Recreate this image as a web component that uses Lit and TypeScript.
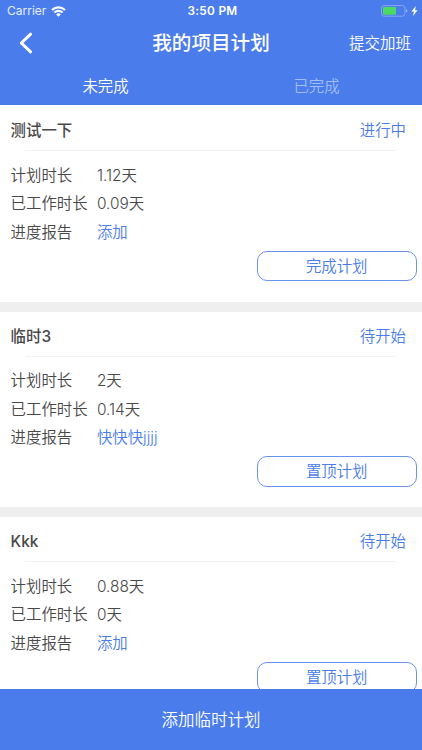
import { LitElement, html, css } from "lit";
import { customElement, property } from "lit/decorators.js";

interface Plan {
  name: string;
  status: string;
  planned: string;
  worked: string;
  report: string;
  action: string;
}

const PLANS: Plan[] = [
  { name: "测试一下", status: "进行中", planned: "1.12天", worked: "0.09天", report: "添加", action: "完成计划" },
  { name: "临时3", status: "待开始", planned: "2天", worked: "0.14天", report: "快快快jjjj", action: "置顶计划" },
  { name: "Kkk", status: "待开始", planned: "0.88天", worked: "0天", report: "添加", action: "置顶计划" },
];

@customElement("status-bar")
export class StatusBar extends LitElement {
  static styles = css`
    :host {
      display: grid;
      grid-template-columns: 1fr auto 1fr;
      align-items: center;
      height: 22px;
      padding: 0 4px 0 7px;
      color: #fff;
      font-size: 12.4px;
      line-height: 22px;
    }
    .left, .right { display: flex; align-items: center; }
    .left { gap: 5px; color: #e6eeff; font-size: 12px; font-weight: 400; }
    .right { justify-content: flex-end; gap: 3px; }
    .time { font-weight: 600; font-size: 11.8px; letter-spacing: 0.3px; }
    svg { display: block; }
  `;

  render() {
    return html`
      <div class="left">
        <span>Carrier</span>
        <svg width="15" height="11" viewBox="0 0 15 11" fill="none" stroke="#fff" stroke-width="2.1">
          <path d="M1 4.1a9.2 9.2 0 0 1 13 0" />
          <path d="M3.4 6.6a5.8 5.8 0 0 1 8.2 0" />
          <path d="M7.5 10.7 5.2 8.4a3.3 3.3 0 0 1 4.6 0z" fill="#fff" stroke="none" />
        </svg>
      </div>
      <div class="time">3:50 PM</div>
      <div class="right">
        <svg width="27" height="12" viewBox="0 0 27 12">
          <rect x="0.5" y="0.6" width="23.4" height="10.6" rx="2.6" fill="none" stroke="#86a8f2" />
          <rect x="2" y="2.1" width="13" height="7.6" rx="1" fill="#4cd964" />
          <path d="M25.1 4.1c1.6.5 1.6 3.1 0 3.6z" fill="#a4bdf5" />
        </svg>
        <svg width="7" height="10" viewBox="0 0 7 10">
          <path d="M4.9 0 0.3 5.5h2.6L1.9 10l4.8-5.8H4z" fill="#fff" />
        </svg>
      </div>
    `;
  }
}

@customElement("plan-card")
export class PlanCard extends LitElement {
  static styles = css`
    :host {
      display: block;
      box-sizing: border-box;
      height: 195.7px;
      background: #fff;
      color: #484848;
      font-size: 15.4px;
    }
    .head {
      display: flex;
      justify-content: space-between;
      height: 44px;
      padding: 0 16px 0 10.6px;
      line-height: 50.6px;
    }
    .name { font-weight: 500; }
    .status, .link { color: #4a7cea; }
    .rule { height: 1px; margin: 0 26px; background: #f3f3f3; }
    .rows { padding: 10.5px 0 0 10.6px; }
    .row { display: flex; height: 28.6px; line-height: 28.6px; }
    .label { width: 86.3px; }
    .action {
      box-sizing: border-box;
      width: 160px;
      height: 30.6px;
      margin: 3.3px 5.3px 0 auto;
      border: 1px solid #6a93ee;
      border-radius: 10px;
      color: #4a7cea;
      line-height: 29.4px;
      text-align: center;
    }
  `;

  @property({ attribute: false }) plan!: Plan;

  render() {
    const p = this.plan;
    return html`
      <div class="head"><span class="name">${p.name}</span><span class="status">${p.status}</span></div>
      <div class="rule"></div>
      <div class="rows">
        <div class="row"><span class="label">计划时长</span><span>${p.planned}</span></div>
        <div class="row"><span class="label">已工作时长</span><span>${p.worked}</span></div>
        <div class="row"><span class="label">进度报告</span><span class="link">${p.report}</span></div>
      </div>
      <div class="action">${p.action}</div>
    `;
  }
}

@customElement("app-root")
export class AppRoot extends LitElement {
  static styles = css`
    :host {
      display: flex;
      flex-direction: column;
      height: 750px;
      overflow: hidden;
      background: #efefef;
      font-family: Inter, "Noto Sans CJK SC", sans-serif;
      font-weight: 350;
    }
    .top { flex: none; height: 105px; border-bottom: 1px solid #fff; background: #4a7ceb; background-clip: padding-box; color: #fff; }
    .nav {
      display: grid;
      grid-template-columns: 1fr auto 1fr;
      align-items: center;
      height: 42px;
      padding: 0 11px 0 19px;
    }
    .back { display: block; }
    .title { font-size: 19.6px; font-weight: 500; padding-right: 8px; margin-top: -3px; }
    .submit { justify-self: end; font-size: 15.5px; margin-top: -2px; }
    .tabs { display: grid; grid-template-columns: 1fr 1fr; height: 41px; line-height: 46px; font-size: 15.4px; text-align: center; }
    .done { color: #a3bdf5; }
    .list {
      flex: 1;
      min-height: 0;
      overflow: hidden;
      display: flex;
      flex-direction: column;
      gap: 10px;
    }
    .list plan-card { flex: none; }
    .add { flex: none; height: 61.5px; line-height: 62px; background: #4a7ceb; color: #fff; font-size: 16.5px; text-align: center; }
  `;

  render() {
    return html`
      <div class="top">
        <status-bar></status-bar>
        <div class="nav">
          <svg class="back" width="14" height="22" viewBox="0 0 14 22" fill="none" stroke="#fff" stroke-width="3" stroke-linecap="round" stroke-linejoin="round">
            <path d="M11.6 2.2 2.3 11l9.3 8.8" />
          </svg>
          <div class="title">我的项目计划</div>
          <div class="submit">提交加班</div>
        </div>
        <div class="tabs"><span>未完成</span><span class="done">已完成</span></div>
      </div>
      <div class="list">${PLANS.map((p) => html`<plan-card .plan=${p}></plan-card>`)}</div>
      <div class="add">添加临时计划</div>
    `;
  }
}
